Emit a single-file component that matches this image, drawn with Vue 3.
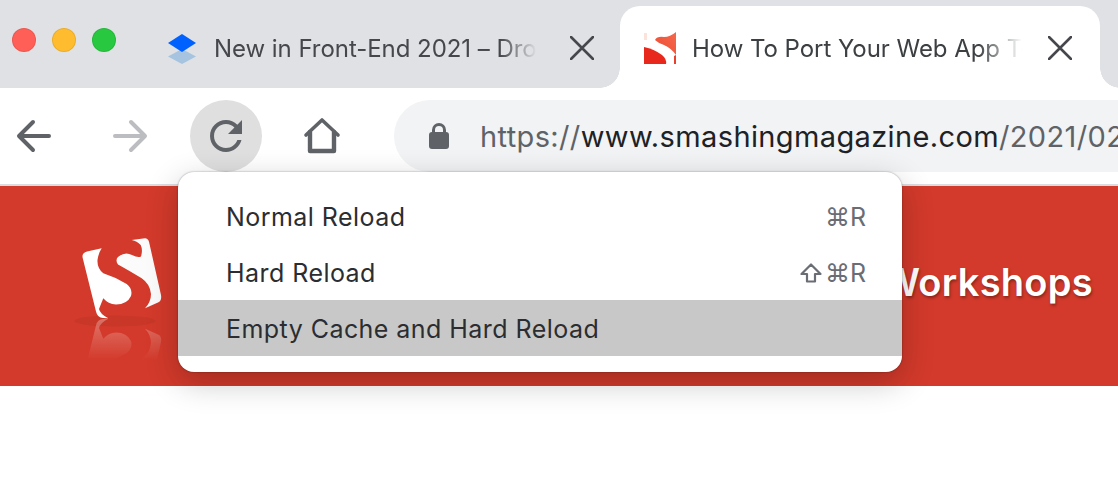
<script setup>
const menuItems = [
  { label: "Normal Reload", keys: "⌘R" },
  { label: "Hard Reload", keys: "⌘R", shift: true },
  { label: "Empty Cache and Hard Reload", active: true },
];

const logoLeft =
  "M101.7 248.3 L87 251.5 Q81.5 253 82.7 258 L96 311.5 Q97.5 318 103 318 L108.3 318.3 Q100 314 99 309 L103.3 298.3 Q108 304 116 304.5 Q127 304.5 131 296 Q133 289 126.7 284 Q115 277 103.3 273.3 Q97 268 97.5 260 Q98.5 253 101.7 248.3 Z";
const logoRight =
  "M131.7 240 L145 238.3 Q148 238.5 149 241.7 L161 295 Q162 301 158 302.5 L145 308.3 Q151 302 151 294 Q150 284 141.7 278.3 Q128 270 118 264.5 Q115 260 118 257 Q125 251 132 255 Q138 258 141 256.5 Q143 250 140.7 245 Q137 241 131.7 240 Z";
</script>

<template>
  <div class="window">
    <div class="tabstrip">
      <div class="lights">
        <span class="light red"></span>
        <span class="light amber"></span>
        <span class="light green"></span>
      </div>
      <div class="tab">
        <svg class="fav-drop" width="28" height="32" viewBox="0 0 28 32">
          <path d="M14 17 L28 24.5 L14 32 L0 24.5 Z" fill="#a6c3e0" />
          <path d="M14 2 L28 11 L14 20 L0 11 Z" fill="#0061fe" />
        </svg>
        <span class="tab-title">New in Front-End 2021 – Dropbox Paper</span>
        <svg class="tab-close" width="24" height="24" viewBox="0 0 24 24">
          <path d="M1 1 L23 23 M23 1 L1 23" stroke="#45474c" stroke-width="2.6" stroke-linecap="round" />
        </svg>
      </div>
      <div class="tab current">
        <svg class="fav-s" width="32" height="32" viewBox="0 0 32 32">
          <defs>
            <linearGradient id="favTop" x1="0" y1="1" x2="1" y2="0">
              <stop offset="0" stop-color="#ee4a32" />
              <stop offset="1" stop-color="#f4694c" />
            </linearGradient>
          </defs>
          <path d="M0 1 H3 V8 H0 Z" fill="#fbe3dc" />
          <path d="M11 8 Q13 4 20 5 Q26 5 32 0 V23 Q27 16 20 13 Q14 11 11 8 Z" fill="url(#favTop)" />
          <path d="M0 15 Q10 17 18 23 Q23 27 22 32 H0 Z" fill="#e8281c" />
          <path d="M30 24 L32 23 V32 H30 Z" fill="#e8402c" />
        </svg>
        <span class="tab-title dark">How To Port Your Web App To Microsoft Edge</span>
        <svg class="tab-close" width="24" height="24" viewBox="0 0 24 24">
          <path d="M1 1 L23 23 M23 1 L1 23" stroke="#45474c" stroke-width="2.6" stroke-linecap="round" />
        </svg>
      </div>
    </div>

    <div class="toolbar">
      <button class="nav-btn first">
        <svg width="72" height="72" viewBox="0 0 72 72" fill="none" stroke="#5f6368" stroke-width="4" stroke-linecap="round" stroke-linejoin="round">
          <path d="M51 36 H22 M35 22 L21 36 L35 50" />
        </svg>
      </button>
      <button class="nav-btn">
        <svg width="72" height="72" viewBox="0 0 72 72" fill="none" stroke="#bcbdc0" stroke-width="4" stroke-linecap="round" stroke-linejoin="round">
          <path d="M21 36 H50 M37 22 L51 36 L37 50" />
        </svg>
      </button>
      <button class="nav-btn hover">
        <svg width="72" height="72" viewBox="0 0 72 72">
          <path transform="translate(12 12) scale(2)" fill="#5f6368" d="M17.65 6.35C16.2 4.9 14.21 4 12 4c-4.42 0-7.99 3.58-7.99 8s3.57 8 7.99 8c3.73 0 6.84-2.55 7.73-6h-2.08c-.82 2.33-3.04 4-5.65 4-3.31 0-6-2.69-6-6s2.69-6 6-6c1.66 0 3.14.69 4.22 1.78L13 11h7V4l-2.35 2.35z" />
        </svg>
      </button>
      <button class="nav-btn">
        <svg width="72" height="72" viewBox="0 0 72 72" fill="none" stroke="#5f6368" stroke-linecap="round" stroke-linejoin="round">
          <path d="M20 35 L36 20 L52 35" stroke-width="3.6" />
          <path d="M24 32 V51 H48 V32" stroke-width="4.4" />
        </svg>
      </button>
      <div class="omnibox">
        <svg class="lock" width="22" height="28" viewBox="0 0 22 28">
          <path d="M5.5 11 V8 a5.5 5.5 0 0 1 11 0 V11" fill="none" stroke="#5f6368" stroke-width="3" />
          <rect x="1" y="10" width="20" height="17" rx="3" fill="#5f6368" />
        </svg>
        <span class="url">https://<b>www.smashingmagazine.com</b>/2021/02/port-web-app-microsoft-edge/</span>
      </div>
    </div>

    <div class="hero">
      <svg class="logo" width="100" height="140" viewBox="70 230 100 140">
        <defs>
          <linearGradient id="fadeFlip" x1="0" y1="319" x2="0" y2="277" gradientUnits="userSpaceOnUse">
            <stop offset="0" stop-color="#fff" stop-opacity="0.3" />
            <stop offset="1" stop-color="#fff" stop-opacity="0" />
          </linearGradient>
        </defs>
        <ellipse cx="115" cy="321" rx="41" ry="5.5" fill="#000" opacity="0.05" />
        <g transform="translate(0 637) scale(1 -1)" fill="url(#fadeFlip)">
          <path :d="logoLeft" />
          <path :d="logoRight" />
        </g>
        <path :d="logoLeft" fill="#fff" />
        <path :d="logoRight" fill="#fbfbfb" />
      </svg>
      <span class="hero-link">Workshops</span>
    </div>

    <div class="menu">
      <div v-for="item in menuItems" :key="item.label" class="menu-item" :class="{ active: item.active }">
        <span>{{ item.label }}</span>
        <span v-if="item.keys" class="keys">
          <svg v-if="item.shift" width="22" height="20" viewBox="0 0 22 20" fill="none" stroke="#6a6d73" stroke-width="2.2" stroke-linejoin="round">
            <path d="M11 1.5 L1.5 11 H7 V18.5 H15 V11 H20.5 Z" />
          </svg>
          {{ item.keys }}
        </span>
      </div>
    </div>
  </div>
</template>

<style scoped>
.window {
  position: relative;
  width: 1118px;
  height: 480px;
  overflow: hidden;
  background: #fff;
  font-family: Inter, "Liberation Sans", sans-serif;
}

.tabstrip {
  display: flex;
  height: 88px;
  background: #dfe1e5;
}

.lights {
  display: flex;
  gap: 16px;
  width: 148px;
  flex: none;
  padding: 28px 0 0 12px;
  box-sizing: border-box;
}

.light {
  width: 24px;
  height: 24px;
  border-radius: 50%;
  box-sizing: border-box;
  border: 1px solid rgba(0, 0, 0, 0.08);
}

.red { background: #ff5f57; }
.amber { background: #febc2e; }
.green { background: #28c840; }

.tab {
  position: relative;
  display: flex;
  align-items: center;
  flex: none;
  width: 472px;
  height: 82px;
  margin-top: 6px;
  padding: 2px 26px 0 20px;
  box-sizing: border-box;
}

.tab.current {
  width: 480px;
  padding: 2px 28px 0 24px;
  background: #fff;
  border-radius: 20px 20px 0 0;
}

.tab.current::before,
.tab.current::after {
  content: "";
  position: absolute;
  bottom: 0;
  width: 20px;
  height: 20px;
}

.tab.current::before {
  left: -20px;
  background: radial-gradient(circle at 0 0, transparent 19.5px, #fff 20px);
}

.tab.current::after {
  right: -20px;
  background: radial-gradient(circle at 100% 0, transparent 19.5px, #fff 20px);
}

.fav-drop {
  flex: none;
  margin-right: 18px;
}

.fav-s {
  flex: none;
  margin-right: 16px;
  filter: blur(0.4px);
}

.tab-title {
  flex: 1;
  min-width: 0;
  overflow: hidden;
  white-space: nowrap;
  font-size: 24px;
  letter-spacing: -0.05px;
  color: #45474c;
  -webkit-mask-image: linear-gradient(to right, #000 calc(100% - 44px), transparent calc(100% - 7px));
  mask-image: linear-gradient(to right, #000 calc(100% - 44px), transparent calc(100% - 7px));
}

.tab-title.dark {
  color: #3c4043;
  -webkit-mask-image: linear-gradient(to right, #000 calc(100% - 44px), transparent 100%);
  mask-image: linear-gradient(to right, #000 calc(100% - 44px), transparent 100%);
}

.tab-close {
  flex: none;
  margin-left: 26px;
}

.toolbar {
  display: flex;
  gap: 24px;
  height: 96px;
  padding: 12px 0;
  box-sizing: border-box;
  background: #fff;
  overflow: hidden;
}

.nav-btn {
  flex: none;
  width: 72px;
  height: 72px;
  padding: 0;
  border: 0;
  background: none;
  border-radius: 50%;
}

.nav-btn svg {
  display: block;
}

.nav-btn.first {
  margin-left: -2px;
}

.nav-btn.hover {
  background: #dfdfdf;
}

.omnibox {
  display: flex;
  align-items: center;
  flex: none;
  width: 800px;
  height: 72px;
  margin-left: 12px;
  padding-left: 34px;
  box-sizing: border-box;
  border-radius: 36px;
  background: #f1f3f4;
  white-space: nowrap;
  overflow: hidden;
}

.lock {
  flex: none;
  margin-right: 30px;
}

.url {
  font-size: 29px;
  letter-spacing: 0.37px;
  color: #5f6368;
}

.url b {
  font-weight: 400;
  color: #202124;
}

.hero {
  display: flex;
  justify-content: space-between;
  align-items: flex-start;
  height: 202px;
  padding: 44px 25px 0 70px;
  box-sizing: border-box;
  border-top: 2px solid #dadce0;
  background: #d33a2b;
}

.logo {
  display: block;
}

.hero-link {
  margin-top: 29px;
  font-size: 38px;
  font-weight: 600;
  letter-spacing: 0.3px;
  color: #fff;
  text-shadow: 1px 2px 3px rgba(0, 0, 0, 0.35);
}

.menu {
  position: absolute;
  left: 178px;
  top: 172px;
  width: 724px;
  padding: 16px 0;
  box-sizing: border-box;
  background: #fff;
  border-radius: 16px;
  box-shadow: 0 0 2px rgba(0, 0, 0, 0.4), 0 10px 32px rgba(0, 0, 0, 0.24);
}

.menu-item {
  display: flex;
  justify-content: space-between;
  align-items: center;
  height: 56px;
  padding: 2px 36px 0 48px;
  box-sizing: border-box;
  font-size: 25px;
  letter-spacing: 0.45px;
  color: #2b2d31;
}

.menu-item.active {
  background: #c8c8c8;
}

.keys {
  display: flex;
  align-items: center;
  gap: 3px;
  letter-spacing: 0;
  color: #6a6d73;
}
</style>
